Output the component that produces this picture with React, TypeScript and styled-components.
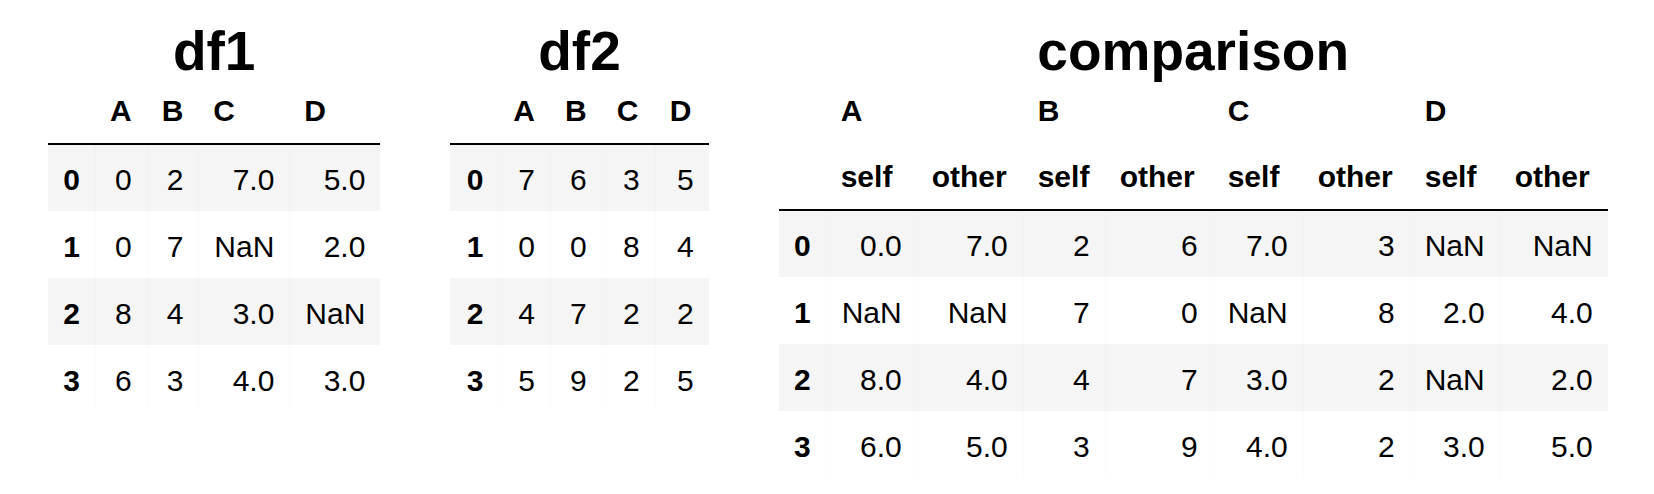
import React from "react";
import styled, { createGlobalStyle } from "styled-components";

const GlobalStyle = createGlobalStyle`
  html, body {
    margin: 0;
    padding: 0;
    background: #ffffff;
  }
  body {
    font-family: "Liberation Sans", Arial, Helvetica, sans-serif;
    color: #000000;
  }
`;

const Page = styled.main`
  display: flex;
  align-items: flex-start;
  gap: 70px;
  padding: 25px 0 0 48px;
`;

const Panel = styled.section`
  display: flex;
  flex-direction: column;
  align-items: center;
`;

const Title = styled.h2`
  margin: 0;
  font-size: 55px;
  line-height: 53px;
  font-weight: 700;
  color: #000;
`;

const Table = styled.table`
  border-collapse: collapse;
  border-spacing: 0;
  font-size: 30px;
  line-height: normal;
  color: #000;
`;

const Head = styled.thead`
  border-bottom: 2px solid #000;
`;

const HeadRow = styled.tr`
  height: 66px;
`;

const HeadCell = styled.th<{ $w?: number }>`
  box-sizing: border-box;
  width: ${(p) => (p.$w ? `${p.$w}px` : "auto")};
  min-width: ${(p) => (p.$w ? `${p.$w}px` : "0")};
  padding: 0 15px;
  text-align: left;
  vertical-align: middle;
  font-weight: 700;
  white-space: nowrap;
`;

const BodyRow = styled.tr<{ $striped: boolean }>`
  height: 67px;
  background: ${(p) => (p.$striped ? "#f5f5f5" : "#ffffff")};
`;

const IndexCell = styled.th`
  padding: 4px 15px 0;
  text-align: right;
  vertical-align: middle;
  font-weight: 700;
  white-space: nowrap;
`;

const DataCell = styled.td`
  padding: 4px 15px 0;
  text-align: right;
  vertical-align: middle;
  font-weight: 400;
  white-space: nowrap;
  box-shadow: inset 1px 0 0 rgba(0, 0, 0, 0.012);
`;

type Cell = string;

const df1Cols = ["A", "B", "C", "D"];
const df1Widths = [47, 51, 51, 91, 91];
const df1Rows: Cell[][] = [
  ["0", "2", "7.0", "5.0"],
  ["0", "7", "NaN", "2.0"],
  ["8", "4", "3.0", "NaN"],
  ["6", "3", "4.0", "3.0"],
];

const df2Cols = ["A", "B", "C", "D"];
const df2Widths = [48, 51, 51, 53, 54];
const df2Rows: Cell[][] = [
  ["7", "6", "3", "5"],
  ["0", "0", "8", "4"],
  ["4", "7", "2", "2"],
  ["5", "9", "2", "5"],
];

const cmpGroups = ["A", "B", "C", "D"];
const cmpWidths = [47, 91, 106, 82, 108, 90, 107, 90, 108];
const cmpRows: Cell[][] = [
  ["0.0", "7.0", "2", "6", "7.0", "3", "NaN", "NaN"],
  ["NaN", "NaN", "7", "0", "NaN", "8", "2.0", "4.0"],
  ["8.0", "4.0", "4", "7", "3.0", "2", "NaN", "2.0"],
  ["6.0", "5.0", "3", "9", "4.0", "2", "3.0", "5.0"],
];

function Body({ rows }: { rows: Cell[][] }) {
  return (
    <tbody>
      {rows.map((row, i) => (
        <BodyRow key={i} $striped={i % 2 === 0}>
          <IndexCell>{i}</IndexCell>
          {row.map((v, j) => (
            <DataCell key={j}>{v}</DataCell>
          ))}
        </BodyRow>
      ))}
    </tbody>
  );
}

function SimpleFrame({
  title,
  cols,
  widths,
  rows,
}: {
  title: string;
  cols: string[];
  widths: number[];
  rows: Cell[][];
}) {
  return (
    <Panel>
      <Title>{title}</Title>
      <Table>
        <Head>
          <HeadRow>
            <HeadCell $w={widths[0]} />
            {cols.map((c, i) => (
              <HeadCell key={c} $w={widths[i + 1]}>
                {c}
              </HeadCell>
            ))}
          </HeadRow>
        </Head>
        <Body rows={rows} />
      </Table>
    </Panel>
  );
}

function ComparisonFrame() {
  return (
    <Panel>
      <Title>comparison</Title>
      <Table>
        <Head>
          <HeadRow>
            <HeadCell />
            {cmpGroups.map((g) => (
              <HeadCell key={g} colSpan={2}>
                {g}
              </HeadCell>
            ))}
          </HeadRow>
          <HeadRow>
            <HeadCell $w={cmpWidths[0]} />
            {cmpGroups.map((g, gi) => (
              <React.Fragment key={g}>
                <HeadCell $w={cmpWidths[gi * 2 + 1]}>self</HeadCell>
                <HeadCell $w={cmpWidths[gi * 2 + 2]}>other</HeadCell>
              </React.Fragment>
            ))}
          </HeadRow>
        </Head>
        <Body rows={cmpRows} />
      </Table>
    </Panel>
  );
}

export default function App() {
  return (
    <>
      <GlobalStyle />
      <Page>
        <SimpleFrame title="df1" cols={df1Cols} widths={df1Widths} rows={df1Rows} />
        <SimpleFrame title="df2" cols={df2Cols} widths={df2Widths} rows={df2Rows} />
        <ComparisonFrame />
      </Page>
    </>
  );
}
